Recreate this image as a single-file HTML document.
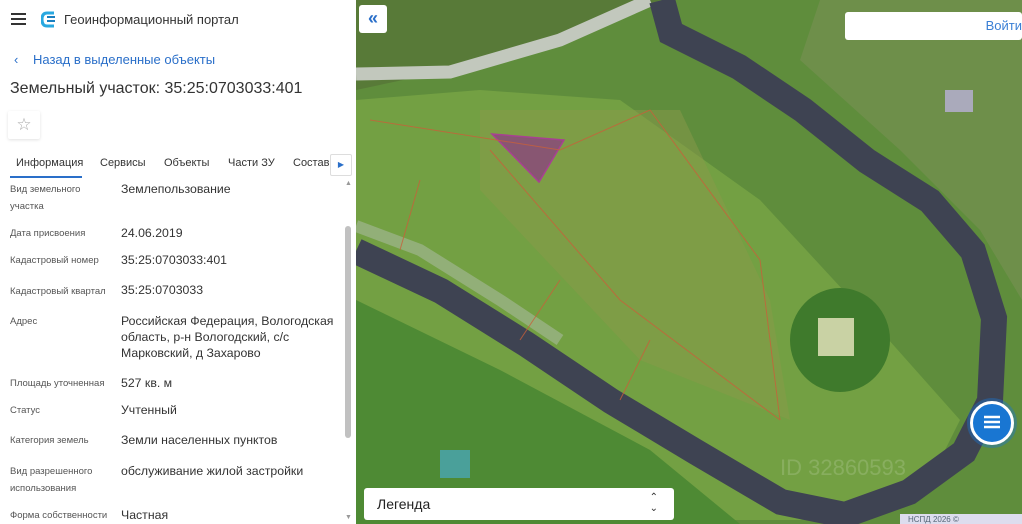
<!DOCTYPE html>
<html><head><meta charset="utf-8"><style>
*{margin:0;padding:0;box-sizing:border-box}
body{width:1022px;height:524px;overflow:hidden;position:relative;font-family:"Liberation Sans",sans-serif;background:#5f8a3a}
#map{position:absolute;left:356px;top:0;width:666px;height:524px}
#panel{position:absolute;left:0;top:0;width:356px;height:524px;background:#fff;color:#333}
.a{position:absolute;white-space:nowrap}
.l{position:absolute;left:10px;font-size:9.5px;color:#555;line-height:17px}
.v{position:absolute;left:121px;font-size:12.3px;color:#333;line-height:16px}
</style></head><body>
<svg id="map" viewBox="356 0 666 524" width="666" height="524">
<rect x="356" y="0" width="666" height="524" fill="#5f8d3c"/>
<path d="M356 0H660L560 40 450 70 356 90Z" fill="#587a38"/>
<path d="M820 0H1022V300L980 230 900 150 800 60Z" fill="#6e8f4a"/>
<path d="M356 100L480 90 620 100 760 200 880 330 960 420 920 500 800 520 356 520Z" fill="#73a043"/>
<path d="M480 110L680 110 770 300 790 420 640 360 480 190Z" fill="#8a9a4a" opacity=".5"/>
<path d="M356 74L450 72 560 40 650 0" stroke="#c2c8bd" stroke-width="13" fill="none"/>
<path d="M662 0L671 33 739 67 803 110 867 161 930 201 973 251 994 318 990 401 964 452 909 492 845 515 781 502 696 452 611 401 526 344 441 291 356 251" stroke="#3e4352" stroke-width="26" fill="none"/>
<path d="M356 226L420 250 500 300 560 340" stroke="#9fb58f" stroke-width="12" fill="none" opacity=".7"/>
<path d="M356 300L500 370 650 450 740 524H356Z" fill="#4e8a34"/>
<ellipse cx="840" cy="340" rx="50" ry="52" fill="#3f7a2c"/>
<rect x="818" y="318" width="36" height="38" fill="#c9d2a4"/>
<path d="M492 134L564 140 539 182Z" fill="#8a4a7a" stroke="#b030a0" stroke-width="1.5" opacity=".85"/>
<g stroke="#c8603a" stroke-width="1" fill="none" opacity=".8">
<path d="M370 120L560 150 650 110 760 260 780 420"/><path d="M490 150L620 300 780 420"/><path d="M420 180L400 250"/><path d="M560 280L520 340"/><path d="M650 340L620 400"/>
</g>
<rect x="440" y="450" width="30" height="28" fill="#4aa09a"/>
<rect x="945" y="90" width="28" height="22" fill="#aab"/>
<text x="780" y="475" font-family="Liberation Sans" font-size="22" fill="#fff" opacity=".15">ID 32860593</text>
<rect x="900" y="514" width="122" height="10" fill="#dde"/>
<text x="908" y="522" font-family="Liberation Sans" font-size="8" fill="#567">НСПД 2026 ©</text>
</svg>
<div class="a" style="left:359px;top:5px;width:28px;height:28px;background:#fff;border-radius:3px;color:#2a6fc9;font-size:18px;text-align:center;line-height:26px;font-weight:bold">«</div>
<div class="a" style="left:845px;top:12px;width:177px;height:28px;background:#fff;border-radius:3px"><span style="position:absolute;right:0;top:6px;color:#3a7fd5;font-size:13px">Войти</span></div>
<div class="a" style="left:364px;top:488px;width:310px;height:32px;background:#fff;border-radius:3px"><span style="position:absolute;left:13px;top:8px;font-size:14px;color:#222">Легенда</span><span style="position:absolute;right:16px;top:4px;font-size:10px;line-height:11px;color:#333">⌃<br>⌄</span></div>
<div class="a" style="left:970px;top:401px;width:44px;height:44px;border-radius:50%;background:#1976d2;border:3px solid #fff;box-shadow:0 0 0 3px rgba(25,118,210,.4)">
<svg width="38" height="38" viewBox="0 0 38 38"><path d="M11 13h16M11 18h16M11 23h16" stroke="#fff" stroke-width="2.5"/></svg></div>
<div id="panel">
<svg class="a" style="left:11px;top:13px" width="15" height="12"><path d="M0 1h15M0 6h15M0 11h15" stroke="#333" stroke-width="2"/></svg>
<svg class="a" style="left:41px;top:11px" width="16" height="17"><path d="M13 2H6Q1 2 1 8.5T6 15h7" stroke="#29a8e0" stroke-width="3" fill="none"/><path d="M6 6h8M6 10h8" stroke="#1a7fc0" stroke-width="2"/></svg>
<div class="a" style="left:64px;top:12px;font-size:13px;color:#333">Геоинформационный портал</div>
<div class="a" style="left:14px;top:52px;font-size:13px;color:#2a6fc9">‹</div>
<div class="a" style="left:33px;top:52px;font-size:13px;color:#2a6fc9">Назад в выделенные объекты</div>
<div class="a" style="left:10px;top:80px;font-size:16px;color:#333">Земельный участок: 35:25:0703033:401</div>
<div class="a" style="left:8px;top:111px;width:32px;height:28px;box-shadow:0 1px 3px rgba(0,0,0,.12);border-radius:2px;color:#aaa;font-size:17px;text-align:center;line-height:28px">☆</div>
<div class="a" style="left:16px;top:157px;font-size:11px;color:#333">Информация</div>
<div class="a" style="left:10px;top:176px;width:72px;height:2px;background:#2a6fc9"></div>
<div class="a" style="left:100px;top:157px;font-size:11px;color:#333">Сервисы</div>
<div class="a" style="left:164px;top:157px;font-size:11px;color:#333">Объекты</div>
<div class="a" style="left:228px;top:157px;font-size:11px;color:#333">Части ЗУ</div>
<div class="a" style="left:293px;top:157px;font-size:11px;color:#333">Состав</div>
<div class="a" style="left:330px;top:154px;width:22px;height:22px;background:#fff;border:1px solid #ddd;border-radius:2px;color:#2a6fc9;font-size:8px;text-align:center;line-height:20px">▶</div>
<div class="a" style="left:345px;top:226px;width:6px;height:212px;background:#c1c1c1;border-radius:3px"></div>
<div class="a" style="left:345px;top:180px;font-size:7px;color:#999">▲</div>
<div class="a" style="left:345px;top:514px;font-size:7px;color:#999">▼</div>
<div class="l" style="top:181px">Вид земельного<br>участка</div><div class="v" style="top:181px">Землепользование</div>
<div class="l" style="top:225px">Дата присвоения</div><div class="v" style="top:225px">24.06.2019</div>
<div class="l" style="top:252px">Кадастровый номер</div><div class="v" style="top:252px">35:25:0703033:401</div>
<div class="l" style="top:283px">Кадастровый квартал</div><div class="v" style="top:282px">35:25:0703033</div>
<div class="l" style="top:313px">Адрес</div><div class="v" style="top:313px">Российская Федерация, Вологодская<br>область, р-н Вологодский, с/с<br>Марковский, д Захарово</div>
<div class="l" style="top:375px">Площадь уточненная</div><div class="v" style="top:375px">527 кв. м</div>
<div class="l" style="top:402px">Статус</div><div class="v" style="top:402px">Учтенный</div>
<div class="l" style="top:432px">Категория земель</div><div class="v" style="top:432px">Земли населенных пунктов</div>
<div class="l" style="top:463px">Вид разрешенного<br>использования</div><div class="v" style="top:463px">обслуживание жилой застройки</div>
<div class="l" style="top:507px">Форма собственности</div><div class="v" style="top:507px">Частная</div>
</div>
</body></html>
